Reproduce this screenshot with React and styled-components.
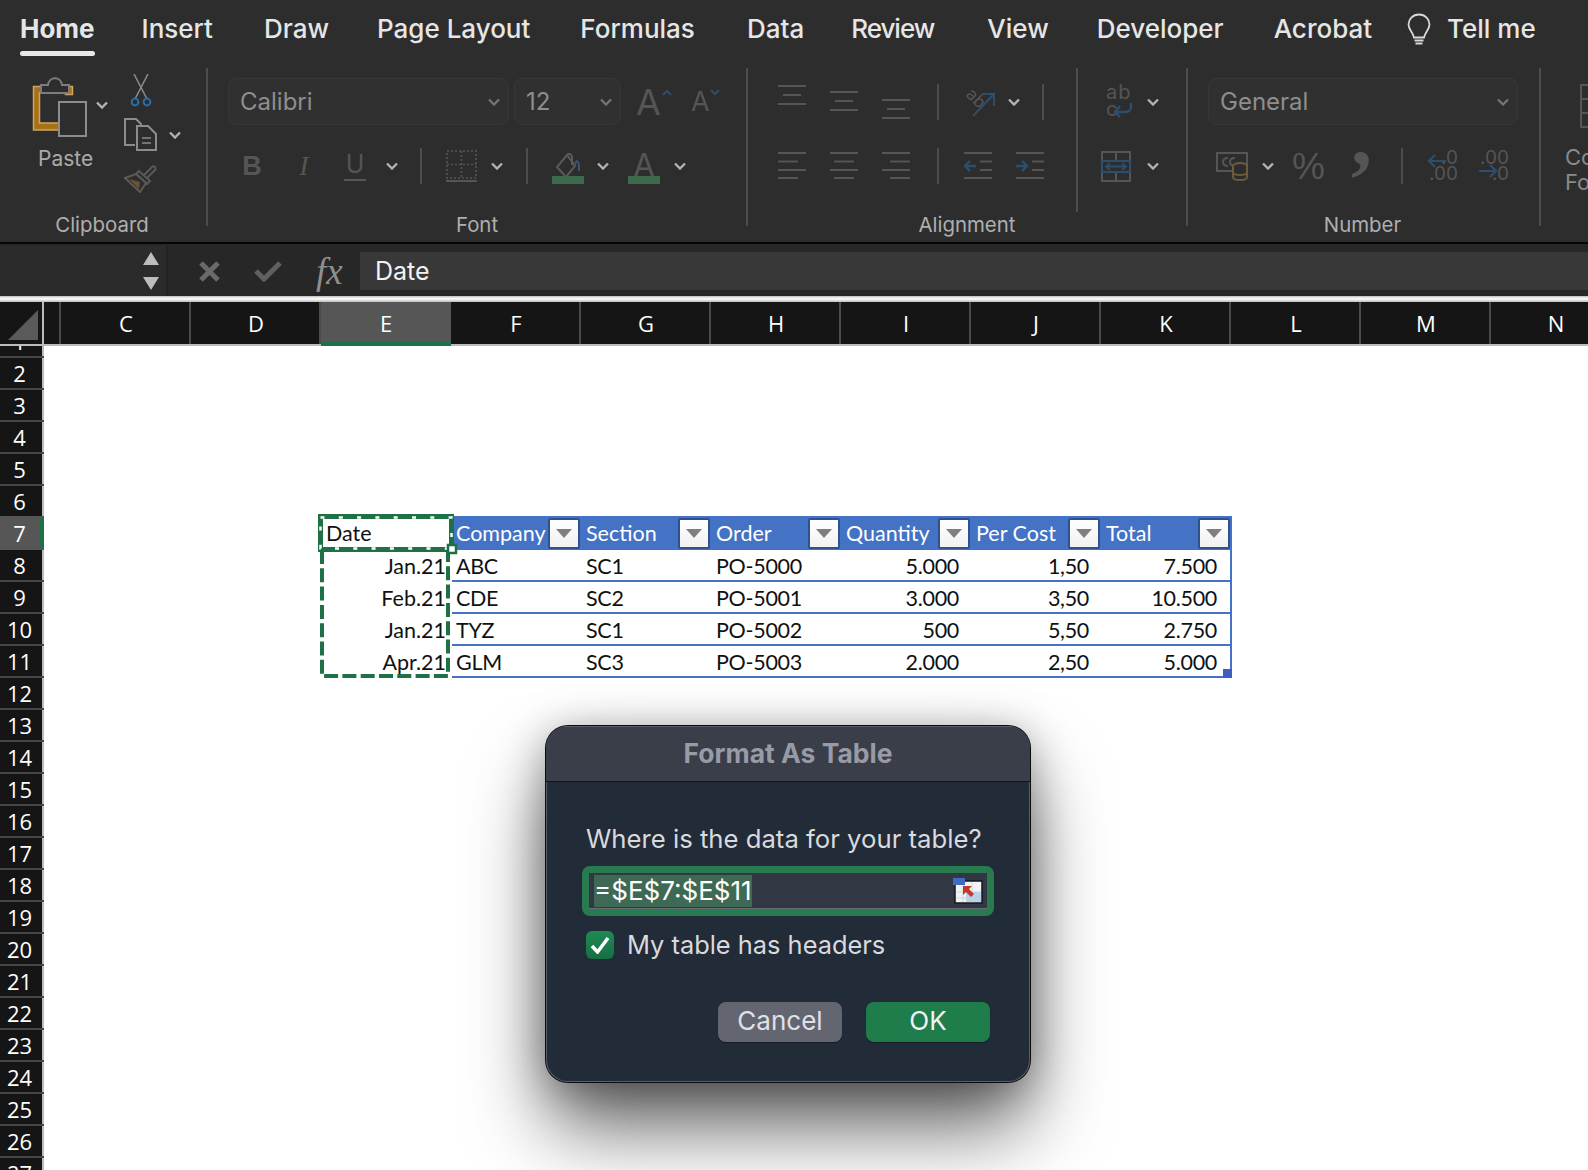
import React from "react";
import styled, { createGlobalStyle } from "styled-components";

const Global = createGlobalStyle`
  html, body { margin: 0; padding: 0; background: #fff; overflow: hidden; }
  body { font-family: "Inter", "Noto Sans", sans-serif; }
`;

const Page = styled.div`
  position: relative;
  width: 1588px;
  height: 1170px;
  overflow: hidden;
  display: flex;
  flex-direction: column;
  background: #fff;
`;

/* tabs */
const TabBar = styled.div`
  height: 60px;
  background: #2d2d2d;
  display: flex;
  align-items: flex-start;
  padding-left: 20px;
  box-sizing: border-box;
`;
const Tab = styled.div`
  margin-left: ${(p) => p.$ml || 0}px;
  padding-top: 14px;
  height: 42px;
  font-size: 26px;
  line-height: 30px;
  font-weight: ${(p) => (p.$active ? 700 : 500)};
  letter-spacing: ${(p) => p.$ls || 0}px;
  color: #e6e6e6;
  white-space: nowrap;
  &::after {
    content: "";
    display: ${(p) => (p.$active ? "block" : "none")};
    height: 5px;
    border-radius: 3px;
    background: #e8e8e8;
    margin-top: 7px;
  }
`;
const Bulb = styled.svg`
  width: 24px;
  height: 32px;
  margin: 13px 0 0 35px;
  flex: none;
`;

/* ribbon */
const Ribbon = styled.div`
  height: 184px;
  box-sizing: border-box;
  background: #2d2d2d;
  border-bottom: 2px solid #050505;
  display: flex;
  flex: none;
  overflow: hidden;
`;
const Group = styled.div`
  width: ${(p) => p.$w}px;
  flex: none;
  display: flex;
  flex-direction: column;
  height: 182px;
  padding-top: 8px;
  box-sizing: border-box;
`;
const GroupDivider = styled.div`
  width: 2px;
  height: 158px;
  margin-top: 8px;
  background: #4c4c4c;
  flex: none;
`;
const GroupLabel = styled.div`
  margin-top: auto;
  padding-bottom: 5px;
  padding-right: ${(p) => p.$pr || 0}px;
  text-align: center;
  font-size: 20.4px;
  line-height: 24px;
  color: #afafaf;
`;
const Split = styled.div`
  display: flex;
  align-items: flex-start;
`;
const Stack = styled.div`
  width: ${(p) => p.$w}px;
  flex: none;
`;
const ShortDivider = styled.div`
  width: 2px;
  height: 144px;
  background: #4c4c4c;
  flex: none;
`;
const ToolRow = styled.div`
  display: flex;
  align-items: center;
  height: ${(p) => (p.$first ? 47 : 44)}px;
  margin-top: ${(p) => (p.$first ? 10 : 19)}px;
`;
const Tool = styled.span`
  display: inline-flex;
  align-items: center;
  justify-content: ${(p) => (p.$start ? "flex-start" : "center")};
  flex: none;
  width: ${(p) => p.$w}px;
  margin-left: ${(p) => p.$ml || 0}px;
  height: 36px;
  position: relative;
`;
const ToolSep = styled.span`
  width: 2px;
  height: 36px;
  background: #4c4c4c;
  margin-left: ${(p) => p.$ml}px;
  flex: none;
`;
const Select = styled.div`
  width: ${(p) => p.$w}px;
  margin-left: ${(p) => p.$ml}px;
  height: 47px;
  box-sizing: border-box;
  flex: none;
  display: flex;
  align-items: center;
  justify-content: space-between;
  padding: 0 8px 0 11px;
  background: #303030;
  border: 1px solid #373737;
  border-radius: 8px;
  font-size: 24px;
  color: #8e8e8e;
`;
const Glyph = styled.span`
  font-family: ${(p) => p.$font || '"Inter", sans-serif'};
  font-size: ${(p) => p.$size}px;
  font-weight: ${(p) => p.$weight || 400};
  font-style: ${(p) => (p.$italic ? "italic" : "normal")};
  color: ${(p) => p.$color || "#555"};
  line-height: 1;
`;
const UnderGlyph = styled(Glyph)`
  border-bottom: 2px solid #555;
  padding: 0 2px 2px;
  line-height: 26px;
`;
const CommaGlyph = styled(Glyph)`
  transform: translateY(-30px);
`;
const ColorBar = styled.span`
  position: absolute;
  left: 0;
  right: 0;
  bottom: 0;
  height: 8px;
  background: #3d6a4d;
`;
const NumberStack = styled.span`
  display: flex;
  flex-direction: column;
  align-items: flex-end;
  font-size: 19px;
  line-height: 16px;
  color: #555;
  width: 100%;
`;
const WrapText = styled.span`
  position: absolute;
  left: 1px;
  top: 0;
  font-size: 20px;
  line-height: 17px;
  color: #555;
  letter-spacing: 1px;
`;

/* clipboard */
const ClipRow = styled.div`
  display: flex;
  align-items: flex-start;
  padding-left: 30px;
`;
const PasteCol = styled.div`
  width: 66px;
  box-sizing: border-box;
  flex: none;
  display: flex;
  flex-direction: column;
  align-items: flex-start;
  padding: 9px 0 0 2px;
`;
const PasteText = styled.div`
  font-size: 21px;
  line-height: 26px;
  color: #ababab;
  margin-top: 9px;
  padding-left: 6px;
`;
const PasteChevron = styled.span`
  display: flex;
  width: 12px;
  flex: none;
  margin-top: 33px;
`;
const SmallCol = styled.div`
  margin-left: 16px;
  width: 60px;
  flex: none;
  display: flex;
  flex-direction: column;
  gap: 11px;
  padding-top: 6px;
`;
const SmallTool = styled.div`
  display: flex;
  align-items: center;
  gap: 11px;
  margin-left: ${(p) => p.$ml || 0}px;
`;

/* next group, cut off by the window */
const CutOffGroup = styled.div`
  flex: none;
  padding: 24px 0 0 24px;
  display: flex;
  flex-direction: column;
`;
const CutOffIcon = styled.svg`
  width: 30px;
  height: 44px;
  margin-left: 15px;
  flex: none;
`;
const CutOffText = styled.div`
  margin-top: 17px;
  font-size: 22px;
  line-height: 25px;
  color: #8a8a8a;
  white-space: nowrap;
`;

/* formula bar */
const FormulaBar = styled.div`
  height: 52px;
  background: #272727;
  display: flex;
  align-items: center;
  flex: none;
  padding-top: 2px;
  box-sizing: border-box;
`;
const NameBox = styled.div`
  width: 168px;
  height: 50px;
  background: #2b2b2b;
  border-right: 2px solid #232323;
  box-sizing: border-box;
  display: flex;
  flex-direction: column;
  align-items: flex-end;
  justify-content: center;
  gap: 12px;
  padding-right: 7px;
`;
const FormulaButtons = styled.div`
  width: 192px;
  display: flex;
  align-items: center;
  padding-left: 31px;
  gap: 34px;
  box-sizing: border-box;
  flex: none;
`;
const FxText = styled.span`
  font-family: "Liberation Serif", serif;
  font-style: italic;
  font-size: 37px;
  color: #8f8f8f;
  line-height: 1;
`;
const FormulaInput = styled.div`
  flex: 1;
  height: 38px;
  background: #383838;
  padding-left: 15px;
  font-size: 25px;
  line-height: 38px;
  color: #f2f2f2;
`;
const Rule = styled.div`
  height: 6px;
  background: linear-gradient(#bdbdbd, #fff 45%, #bdbdbd);
  flex: none;
`;

/* sheet */
const ColumnRow = styled.div`
  height: 44px;
  background: #151515;
  border-bottom: 2px solid #bcbcbc;
  box-sizing: border-box;
  display: flex;
  flex: none;
`;
const Corner = styled.div`
  width: 44px;
  flex: none;
  border-right: 2px solid #bcbcbc;
  box-sizing: border-box;
  height: 42px;
  display: flex;
  align-items: flex-end;
  padding: 0 0 4px 8px;
`;
const HiddenColumn = styled.div`
  width: 17px;
  flex: none;
  border-right: 2px solid #4a4a4a;
  box-sizing: border-box;
  height: 42px;
`;
const ColumnHead = styled.div`
  width: 130px;
  flex: none;
  height: ${(p) => (p.$active ? 44 : 42)}px;
  box-sizing: border-box;
  padding-left: ${(p) => (p.$active ? 0 : 2)}px;
  background: ${(p) => (p.$active ? "#565656" : "transparent")};
  border-right: ${(p) => (p.$active ? "none" : "2px solid #4a4a4a")};
  border-bottom: ${(p) => (p.$active ? "4px solid #1e7145" : "none")};
  text-align: center;
  font-family: "Open Sans", sans-serif;
  font-size: 22px;
  line-height: 43px;
  color: #fff;
`;
const SheetBody = styled.div`
  flex: 1;
  display: flex;
  min-height: 0;
  overflow: hidden;
`;
const RowGutter = styled.div`
  width: 44px;
  flex: none;
  background: #151515;
  border-right: 2px solid #bcbcbc;
  box-sizing: border-box;
`;
const RowHead = styled.div`
  height: ${(p) => (p.$clip ? 12 : 32)}px;
  box-sizing: border-box;
  overflow: hidden;
  display: flex;
  align-items: flex-end;
  justify-content: center;
  width: 44px;
  position: relative;
  padding-right: 5px;
  border-bottom: 2px solid ${(p) => (p.$active ? "#565656" : "#454545")};
  background: ${(p) => (p.$active ? "#565656" : "transparent")};
  box-shadow: ${(p) => (p.$active ? "0 -2px 0 #565656, inset -4px 0 0 #1e7145" : "none")};
  font-family: "Open Sans", sans-serif;
  font-size: 22px;
  line-height: 30px;
  color: #fff;
`;
const Canvas = styled.div`
  flex: 1;
  padding: 170px 0 0 276px;
`;
const TableWrap = styled.div`
  position: relative;
  display: grid;
  width: 912px;
  grid-template-columns: 132px repeat(6, 130px);
  grid-template-rows: 34px repeat(4, 32px);
  font-family: "Lato", sans-serif;
  font-size: 21.5px;
  color: #111;
`;
const HeadCell = styled.div`
  background: #4472c4;
  color: #fff;
  display: flex;
  align-items: center;
  justify-content: space-between;
  padding: 0 2px 0 4px;
`;
const FilterButton = styled.span`
  width: 32px;
  height: 31px;
  box-sizing: border-box;
  background: linear-gradient(#fff, #f1f1f1);
  border: 2px solid #2f528f;
  border-radius: 2px;
  display: flex;
  align-items: center;
  justify-content: center;
  flex: none;
  &::after {
    content: "";
    border-left: 8px solid transparent;
    border-right: 8px solid transparent;
    border-top: 9px solid #7f7f7f;
  }
`;
const DateCell = styled.div`
  padding: 0 6px 0 6px;
  line-height: ${(p) => (p.$head ? 35 : 33)}px;
  text-align: ${(p) => (p.$head ? "left" : "right")};
`;
const DataCell = styled.div`
  box-sizing: border-box;
  border-bottom: 2px solid #4472c4;
  border-right: ${(p) => (p.$last ? "2px solid #4472c4" : "none")};
  padding: 0 ${(p) => (p.$num ? 13 : 4)}px 0 4px;
  line-height: 33px;
  letter-spacing: -0.3px;
  text-align: ${(p) => (p.$num ? "right" : "left")};
`;
const MarchingAnts = styled.svg`
  position: absolute;
  left: -2px;
  top: -2px;
  width: 140px;
  height: 166px;
  overflow: visible;
  pointer-events: none;
`;
const ResizeHandle = styled.span`
  position: absolute;
  right: 0;
  bottom: 0;
  width: 9px;
  height: 9px;
  background: #3f5fc0;
`;

/* dialog */
const Dialog = styled.div`
  position: absolute;
  left: 546px;
  top: 726px;
  width: 484px;
  height: 356px;
  box-sizing: border-box;
  background: #222b38;
  border-radius: 22px;
  box-shadow: 0 0 0 1px #0c0c0c, inset 0 0 0 1px #5a5e68, 0 48px 80px -4px rgba(0, 0, 0, 0.62),
    0 6px 44px rgba(0, 0, 0, 0.34);
  overflow: hidden;
`;
const DialogTitle = styled.div`
  height: 56px;
  box-sizing: border-box;
  background: #393e49;
  border-bottom: 1px solid #11151b;
  box-shadow: inset 0 1px 0 #5a5e68;
  text-align: center;
  font-size: 26.5px;
  font-weight: 700;
  line-height: 54px;
  color: #989ba5;
`;
const Question = styled.div`
  margin: 39px 0 0 40px;
  font-size: 25.7px;
  line-height: 36px;
  color: #d9dadd;
`;
const RangeField = styled.div`
  margin: 9px 0 0 36px;
  width: 412px;
  height: 50px;
  box-sizing: border-box;
  background: #2a7a50;
  border-radius: 8px;
  padding: 7px;
`;
const RangeInner = styled.div`
  height: 36px;
  box-sizing: border-box;
  background: #323744;
  border-bottom: 1px solid #6a6e78;
  display: flex;
  align-items: center;
  justify-content: space-between;
  padding: 0 4px 0 5px;
`;
const RangeSelection = styled.span`
  background: #3e6a55;
  color: #fff;
  font-size: 26px;
  line-height: 32px;
  height: 32px;
`;
const CheckRow = styled.div`
  margin: 15px 0 0 40px;
  height: 28px;
  display: flex;
  align-items: center;
  gap: 13px;
  font-size: 25.4px;
  line-height: 30px;
  color: #d9dadd;
`;
const CheckBox = styled.span`
  width: 28px;
  height: 28px;
  border-radius: 6px;
  background: linear-gradient(#1f8a52, #176f42);
  display: flex;
  align-items: center;
  justify-content: center;
  flex: none;
`;
const ButtonRow = styled.div`
  margin: 43px 40px 0 0;
  display: flex;
  justify-content: flex-end;
  gap: 24px;
`;
const DialogButton = styled.div`
  width: 124px;
  height: 40px;
  border-radius: 8px;
  background: ${(p) => (p.$primary ? "#1e7d4b" : "#636670")};
  box-shadow: 0 1px 1px rgba(0, 0, 0, 0.35);
  text-align: center;
  font-size: 26px;
  line-height: 38px;
  color: ${(p) => (p.$primary ? "#f2f2f2" : "#e0e1e4")};
`;

/* drawings */
const Chevron = () => (
  <svg width="12" height="8" viewBox="0 0 12 8">
    <polyline points="1,1.5 6,6.5 11,1.5" fill="none" stroke="#b2b2b2" strokeWidth="2.4" />
  </svg>
);
const SelectChevron = () => (
  <svg width="12" height="8" viewBox="0 0 12 8">
    <polyline points="1,1.5 6,6.5 11,1.5" fill="none" stroke="#777" strokeWidth="2.2" />
  </svg>
);
const PasteIcon = () => (
  <svg width="56" height="60" viewBox="0 0 56 60">
    <path d="M1.5 9.5h39v8h-7v-1.5h-26v30h24v7h-30z" fill="#a97016" stroke="#c9a864" strokeWidth="1.5" />
    <path d="M9 8h7c1-9 13-9 14 0h7v8H9z" fill="#2d2d2d" stroke="#7d7d7d" strokeWidth="2" />
    <rect x="27" y="25" width="27" height="34" fill="#2d2d2d" stroke="#8c8c8c" strokeWidth="2" />
  </svg>
);
const ScissorsIcon = () => (
  <svg width="22" height="33" viewBox="0 0 22 33">
    <path d="M4 0l13 25M18 0L5 25" fill="none" stroke="#8a8a8a" strokeWidth="1.6" />
    <circle cx="5" cy="28" r="3.4" fill="none" stroke="#2a6ea8" strokeWidth="2" />
    <circle cx="17" cy="28" r="3.4" fill="none" stroke="#2a6ea8" strokeWidth="2" />
  </svg>
);
const CopyIcon = () => (
  <svg width="34" height="33" viewBox="0 0 34 33">
    <path d="M11 27H1V1h11l5 5v4" fill="none" stroke="#8c8c8c" strokeWidth="2" />
    <path d="M13 8h11l8 8v16H13z" fill="#2d2d2d" stroke="#8c8c8c" strokeWidth="2" />
    <path d="M18 20h9M18 25h9" stroke="#8c8c8c" strokeWidth="1.6" />
  </svg>
);
const BrushIcon = () => (
  <svg width="34" height="31" viewBox="0 0 34 31">
    <path d="M19 14l9-9c2-2 5 1 3 3l-9 9" fill="none" stroke="#595959" strokeWidth="2" />
    <path d="M15 9l11 10-3 3L12 12z" fill="#2d2d2d" stroke="#595959" strokeWidth="2" />
    <path d="M12 12L1 16l15 14 6-9z" fill="#2d2d2d" stroke="#5e5a52" strokeWidth="2" />
    <path d="M5 17l11 3-1 7z" fill="#6b5336" />
  </svg>
);
const BordersIcon = () => (
  <svg width="31" height="32" viewBox="0 0 31 32">
    <path d="M1 1h29v27H1zM15.5 1v27M1 14.5h29" fill="none" stroke="#555" strokeWidth="1.6" strokeDasharray="2 2" />
    <path d="M0 31h31" stroke="#555" strokeWidth="2" />
  </svg>
);
const FillIcon = () => (
  <svg width="24" height="26" viewBox="0 0 24 26">
    <path d="M11 2L1 14l9 10 9-11z" fill="none" stroke="#5a5a5a" strokeWidth="2" />
    <path d="M11 2c2-2 5-1 5 2v8" fill="none" stroke="#5a5a5a" strokeWidth="2" />
    <path d="M19 12c1-5 3-5 4 0v6" fill="none" stroke="#3c5370" strokeWidth="2" />
  </svg>
);
const CaretMark = ({ down }) => (
  <svg width="10" height="7" viewBox="0 0 10 7" style={{ position: "absolute", right: 0, top: 5 }}>
    <polyline points={down ? "1,1 5,5 9,1" : "1,6 5,2 9,6"} fill="none" stroke="#2d4f6c" strokeWidth="2" />
  </svg>
);
const ROWS3 = { top: [2, 11, 20], mid: [8, 17, 26], bot: [16, 25, 34] };
const VAlign = ({ at }) => (
  <svg width="28" height="36" viewBox="0 0 28 36">
    {ROWS3[at].map((y, i) => (
      <path key={y} d={i === 1 ? `M5 ${y}h18` : `M0 ${y}h28`} stroke="#555" strokeWidth="2" />
    ))}
  </svg>
);
const HAlign = ({ at }) => (
  <svg width="28" height="36" viewBox="0 0 28 36">
    {[5, 13.5, 22, 30].map((y, i) => {
      const w = i % 2 ? 20 : 28;
      const x = at === "left" ? 0 : at === "right" ? 28 - w : (28 - w) / 2;
      return <path key={y} d={`M${x} ${y}h${w}`} stroke="#555" strokeWidth="2" />;
    })}
  </svg>
);
const IndentIcon = ({ out }) => (
  <svg width="28" height="36" viewBox="0 0 28 36">
    <path d="M0 5h28M0 30h28M16 13.5h12M16 22h12" stroke="#555" strokeWidth="2" />
    {out ? (
      <path d="M12 18H1M6 13l-5 5 5 5" fill="none" stroke="#2d4f6c" strokeWidth="2.4" />
    ) : (
      <path d="M0 18h11M6 13l5 5-5 5" fill="none" stroke="#2d4f6c" strokeWidth="2.4" />
    )}
  </svg>
);
const OrientIcon = () => (
  <svg width="33" height="32" viewBox="0 0 33 32">
    <text x="3" y="15" fontFamily="Inter, sans-serif" fontSize="17" fill="#555" transform="rotate(45 10 12)">
      ab
    </text>
    <path d="M11 30L31 9M20 8h12v12" fill="none" stroke="#2d4f6c" strokeWidth="2" />
  </svg>
);
const WrapArrow = () => (
  <svg width="20" height="16" viewBox="0 0 20 16" style={{ position: "absolute", right: 0, bottom: 2 }}>
    <path d="M18 1v4c0 4-3 5-6 5H2M7 4L2 10l5 5" fill="none" stroke="#2d4f6c" strokeWidth="2.4" />
  </svg>
);
const MergeIcon = () => (
  <svg width="30" height="31" viewBox="0 0 30 31">
    <path d="M1 1h28v29H1zM15 1v9M15 21v9" fill="none" stroke="#555" strokeWidth="2" />
    <rect x="1" y="10" width="28" height="11" fill="none" stroke="#2d4f6c" strokeWidth="2" />
    <path d="M5 15.5h20M9 12l-4 3.5 4 3.5M21 12l4 3.5-4 3.5" fill="none" stroke="#2d4f6c" strokeWidth="2" />
  </svg>
);
const AccountingIcon = () => (
  <svg width="33" height="30" viewBox="0 0 33 30">
    <rect x="1" y="2" width="30" height="18" fill="none" stroke="#555" strokeWidth="2" />
    <path d="M12 7c-4 0-5 2-5 4s1 4 5 4M19 7c-4 0-5 2-5 4s1 4 5 4" fill="none" stroke="#555" strokeWidth="2" />
    <ellipse cx="24" cy="15" rx="7" ry="3" fill="#2d2d2d" stroke="#6d5c3a" strokeWidth="2" />
    <path d="M17 15v11c0 4 14 4 14 0V15M17 21c0 4 14 4 14 0" fill="#2d2d2d" stroke="#6d5c3a" strokeWidth="2" />
  </svg>
);
const DecimalArrow = ({ left }) => (
  <svg width="20" height="14" viewBox="0 0 20 14" style={{ position: "absolute", left: 0, top: left ? 6 : 16 }}>
    {left ? (
      <path d="M19 7H2M8 1L2 7l6 6" fill="none" stroke="#2d4f6c" strokeWidth="2.2" />
    ) : (
      <path d="M1 7h17M12 1l6 6-6 6" fill="none" stroke="#2d4f6c" strokeWidth="2.2" />
    )}
  </svg>
);
const RangeIcon = () => (
  <svg width="30" height="26" viewBox="0 0 30 26">
    <rect x="2" y="3" width="27" height="22" fill="#f2f3f5" stroke="#14171d" strokeWidth="1.5" />
    <path d="M3 14h25M3 20h25M10 4v20M19 4v20" stroke="#cfd3da" strokeWidth="1" />
    <rect x="13" y="14" width="15" height="10" fill="#bcd0ea" />
    <rect x="0" y="0" width="12" height="7" fill="#3f6cc0" />
    <path d="M10 8h9l-3 3 5 5-3 3-5-5-3 3z" fill="#c0392f" />
  </svg>
);

const TABS = [
  ["Insert", 47],
  ["Draw", 51],
  ["Page Layout", 48],
  ["Formulas", 50],
  ["Data", 52],
  ["Review", 47, -1],
  ["View", 53],
  ["Developer", 48],
  ["Acrobat", 50],
];
const COLUMNS = ["C", "D", "E", "F", "G", "H", "I", "J", "K", "L", "M", "N"];
const ROW_NUMBERS = Array.from({ length: 27 }, (_, i) => i + 1);
const HEADERS = ["Company", "Section", "Order", "Quantity", "Per Cost", "Total"];
const DATA = [
  ["Jan.21", "ABC", "SC1", "PO-5000", "5.000", "1,50", "7.500"],
  ["Feb.21", "CDE", "SC2", "PO-5001", "3.000", "3,50", "10.500"],
  ["Jan.21", "TYZ", "SC1", "PO-5002", "500", "5,50", "2.750"],
  ["Apr.21", "GLM", "SC3", "PO-5003", "2.000", "2,50", "5.000"],
];

const App = () => {
  return (
    <Page>
      <Global />
      <TabBar>
        <Tab $active>Home</Tab>
        {TABS.map(([name, ml, ls]) => (
          <Tab key={name} $ml={ml} $ls={ls}>
            {name}
          </Tab>
        ))}
        <Bulb viewBox="0 0 24 32">
          <path
            d="M12 1.5C5.5 1.5 1.5 6.5 1.5 11.5c0 5 4.5 7.5 5.5 13h10c1-5.5 5.5-8 5.5-13C22.5 6.5 18.5 1.5 12 1.5z"
            fill="none"
            stroke="#d8d8d8"
            strokeWidth="1.8"
          />
          <path d="M7.5 27.5h9M8.5 30.5h7" stroke="#d8d8d8" strokeWidth="2" />
        </Bulb>
        <Tab $ml={16}>Tell me</Tab>
      </TabBar>

      <Ribbon>
        <Group $w={206}>
          <ClipRow>
            <PasteCol>
              <PasteIcon />
              <PasteText>Paste</PasteText>
            </PasteCol>
            <PasteChevron>
              <Chevron />
            </PasteChevron>
            <SmallCol>
              <SmallTool $ml={6}>
                <ScissorsIcon />
              </SmallTool>
              <SmallTool>
                <CopyIcon />
                <Chevron />
              </SmallTool>
              <SmallTool>
                <BrushIcon />
              </SmallTool>
            </SmallCol>
          </ClipRow>
          <GroupLabel $pr={2}>Clipboard</GroupLabel>
        </Group>
        <GroupDivider />

        <Group $w={538}>
          <ToolRow $first>
            <Select $ml={20} $w={281}>
              Calibri
              <SelectChevron />
            </Select>
            <Select $ml={5} $w={107}>
              12
              <SelectChevron />
            </Select>
            <Tool $ml={15} $w={36} $start>
              <Glyph $size={36}>A</Glyph>
              <CaretMark />
            </Tool>
            <Tool $ml={19} $w={29} $start>
              <Glyph $size={27}>A</Glyph>
              <CaretMark down />
            </Tool>
          </ToolRow>
          <ToolRow>
            <Tool $ml={36} $w={16}>
              <Glyph $size={27} $weight={700} $font='"Liberation Sans", sans-serif'>
                B
              </Glyph>
            </Tool>
            <Tool $ml={36} $w={16}>
              <Glyph $size={28} $italic $font='"Liberation Serif", serif'>
                I
              </Glyph>
            </Tool>
            <Tool $ml={32} $w={22}>
              <UnderGlyph $size={25}>U</UnderGlyph>
            </Tool>
            <Tool $ml={20} $w={12}>
              <Chevron />
            </Tool>
            <ToolSep $ml={22} />
            <Tool $ml={24} $w={31}>
              <BordersIcon />
            </Tool>
            <Tool $ml={14} $w={12}>
              <Chevron />
            </Tool>
            <ToolSep $ml={23} />
            <Tool $ml={24} $w={32}>
              <FillIcon />
              <ColorBar />
            </Tool>
            <Tool $ml={13} $w={12}>
              <Chevron />
            </Tool>
            <Tool $ml={19} $w={32}>
              <Glyph $size={32}>A</Glyph>
              <ColorBar />
            </Tool>
            <Tool $ml={14} $w={12}>
              <Chevron />
            </Tool>
          </ToolRow>
          <GroupLabel>Font</GroupLabel>
        </Group>
        <GroupDivider />

        <Group $w={438}>
          <Split>
            <Stack $w={328}>
              <ToolRow $first>
                <Tool $ml={30} $w={28}>
                  <VAlign at="top" />
                </Tool>
                <Tool $ml={24} $w={28}>
                  <VAlign at="mid" />
                </Tool>
                <Tool $ml={24} $w={28}>
                  <VAlign at="bot" />
                </Tool>
                <ToolSep $ml={27} />
                <Tool $ml={23} $w={33}>
                  <OrientIcon />
                </Tool>
                <Tool $ml={13} $w={12}>
                  <Chevron />
                </Tool>
                <ToolSep $ml={22} />
              </ToolRow>
              <ToolRow>
                <Tool $ml={30} $w={28}>
                  <HAlign at="left" />
                </Tool>
                <Tool $ml={24} $w={28}>
                  <HAlign at="center" />
                </Tool>
                <Tool $ml={24} $w={28}>
                  <HAlign at="right" />
                </Tool>
                <ToolSep $ml={27} />
                <Tool $ml={25} $w={28}>
                  <IndentIcon out />
                </Tool>
                <Tool $ml={24} $w={28}>
                  <IndentIcon />
                </Tool>
              </ToolRow>
            </Stack>
            <ShortDivider />
            <Stack $w={108}>
              <ToolRow $first>
                <Tool $ml={27} $w={28}>
                  <WrapText>
                    ab
                    <br />c
                  </WrapText>
                  <WrapArrow />
                </Tool>
                <Tool $ml={14} $w={12}>
                  <Chevron />
                </Tool>
              </ToolRow>
              <ToolRow>
                <Tool $ml={23} $w={30}>
                  <MergeIcon />
                </Tool>
                <Tool $ml={16} $w={12}>
                  <Chevron />
                </Tool>
              </ToolRow>
            </Stack>
          </Split>
          <GroupLabel>Alignment</GroupLabel>
        </Group>
        <GroupDivider />

        <Group $w={351}>
          <ToolRow $first>
            <Select $ml={20} $w={310}>
              General
              <SelectChevron />
            </Select>
          </ToolRow>
          <ToolRow>
            <Tool $ml={28} $w={33}>
              <AccountingIcon />
            </Tool>
            <Tool $ml={13} $w={12}>
              <Chevron />
            </Tool>
            <Tool $ml={19} $w={31}>
              <Glyph $size={37} $font='"Liberation Sans", sans-serif'>
                %
              </Glyph>
            </Tool>
            <Tool $ml={30} $w={15}>
              <CommaGlyph $size={84} $weight={700} $font='"Liberation Serif", serif'>
                ,
              </CommaGlyph>
            </Tool>
            <ToolSep $ml={32} />
            <Tool $ml={24} $w={31}>
              <NumberStack>
                <span>.0</span>
                <span>.00</span>
              </NumberStack>
              <DecimalArrow left />
            </Tool>
            <Tool $ml={20} $w={31}>
              <NumberStack>
                <span>.00</span>
                <span>.0</span>
              </NumberStack>
              <DecimalArrow />
            </Tool>
          </ToolRow>
          <GroupLabel $pr={2}>Number</GroupLabel>
        </Group>
        <GroupDivider />
        <CutOffGroup>
          <CutOffIcon viewBox="0 0 30 44">
            <path d="M1 1h28v42H1zM1 15h28M1 29h28M15 1v42" fill="none" stroke="#555" strokeWidth="2" />
          </CutOffIcon>
          <CutOffText>
            Co
            <br />
            Fo
          </CutOffText>
        </CutOffGroup>
      </Ribbon>

      <FormulaBar>
        <NameBox>
          <svg width="16" height="13" viewBox="0 0 16 13">
            <path d="M8 0l8 13H0z" fill="#bdbdbd" />
          </svg>
          <svg width="16" height="13" viewBox="0 0 16 13">
            <path d="M8 13L0 0h16z" fill="#bdbdbd" />
          </svg>
        </NameBox>
        <FormulaButtons>
          <svg width="21" height="21" viewBox="0 0 21 21">
            <path d="M2 2l17 17M19 2L2 19" stroke="#6a6a6a" strokeWidth="5" />
          </svg>
          <svg width="28" height="22" viewBox="0 0 28 22">
            <path d="M2 11l8 8L26 3" fill="none" stroke="#5f5f5f" strokeWidth="5" />
          </svg>
          <FxText>fx</FxText>
        </FormulaButtons>
        <FormulaInput>Date</FormulaInput>
      </FormulaBar>
      <Rule />

      <ColumnRow>
        <Corner>
          <svg width="30" height="30" viewBox="0 0 30 30">
            <path d="M30 0v30H0z" fill="#5a5a5a" />
          </svg>
        </Corner>
        <HiddenColumn />
        {COLUMNS.map((c) => (
          <ColumnHead key={c} $active={c === "E"}>
            {c}
          </ColumnHead>
        ))}
      </ColumnRow>

      <SheetBody>
        <RowGutter>
          {ROW_NUMBERS.map((n) => (
            <RowHead key={n} $clip={n === 1} $active={n === 7}>
              {n}
            </RowHead>
          ))}
        </RowGutter>
        <Canvas>
          <TableWrap>
            <DateCell $head>Date</DateCell>
            {HEADERS.map((h) => (
              <HeadCell key={h}>
                {h}
                <FilterButton />
              </HeadCell>
            ))}
            {DATA.map((row) =>
              row.map((v, i) =>
                i === 0 ? (
                  <DateCell key={row[1] + i}>{v}</DateCell>
                ) : (
                  <DataCell key={row[1] + i} $num={i > 3} $last={i === 6}>
                    {v}
                  </DataCell>
                )
              )
            )}
            <MarchingAnts viewBox="0 0 140 166">
              <rect x="2.5" y="2.5" width="131" height="33" fill="none" stroke="#1e7145" strokeWidth="5" />
              <rect x="2.5" y="3.5" width="131" height="31" fill="none" stroke="#fff" strokeWidth="2.5" strokeDasharray="4 14.3" />
              <path d="M4 36V162H130V36" fill="none" stroke="#1e7145" strokeWidth="4" strokeDasharray="14 4.3" />
              <rect x="130" y="31" width="8" height="8" fill="#fff" stroke="#1e7145" strokeWidth="2.5" />
            </MarchingAnts>
            <ResizeHandle />
          </TableWrap>
        </Canvas>
      </SheetBody>

      <Dialog>
        <DialogTitle>Format As Table</DialogTitle>
        <Question>Where is the data for your table?</Question>
        <RangeField>
          <RangeInner>
            <RangeSelection>=$E$7:$E$11</RangeSelection>
            <RangeIcon />
          </RangeInner>
        </RangeField>
        <CheckRow>
          <CheckBox>
            <svg width="20" height="18" viewBox="0 0 20 18">
              <path d="M2 10l5.5 6L18 2" fill="none" stroke="#fff" strokeWidth="3.5" />
            </svg>
          </CheckBox>
          My table has headers
        </CheckRow>
        <ButtonRow>
          <DialogButton>Cancel</DialogButton>
          <DialogButton $primary>OK</DialogButton>
        </ButtonRow>
      </Dialog>
    </Page>
  );
};

export default App;
